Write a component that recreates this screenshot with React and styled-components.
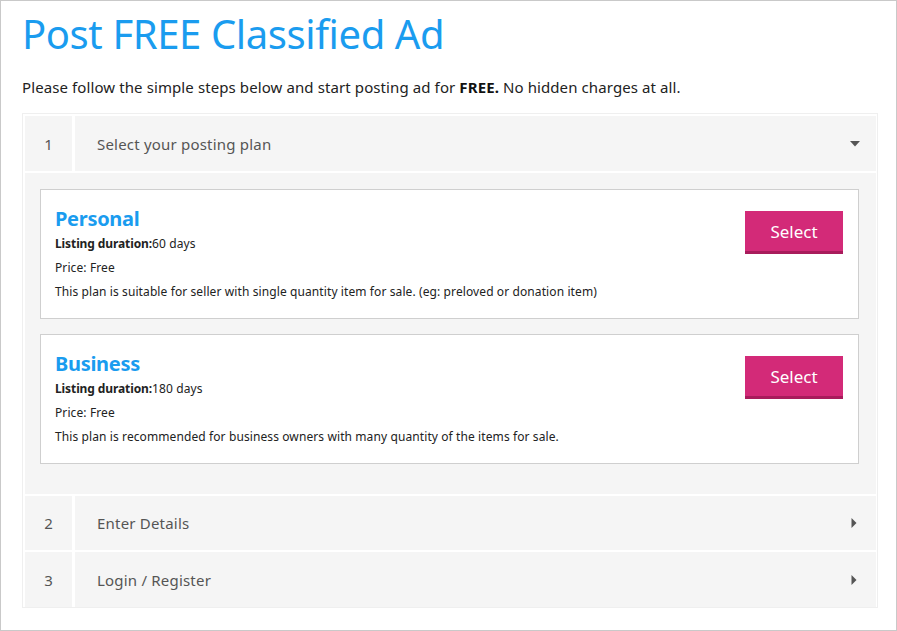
import React from "react";
import styled, { createGlobalStyle } from "styled-components";

const GlobalStyle = createGlobalStyle`
  html, body { margin: 0; padding: 0; background: #fff; }
  body { font-family: "Noto Sans", "Open Sans", sans-serif; color: #222; }
  * { box-sizing: border-box; }
`;

const Page = styled.div`
  width: 897px;
  height: 631px;
  border: 1px solid #c9c9c9;
  padding: 0 19px 0 21px;
  overflow: hidden;
`;

const Title = styled.h1`
  margin: 8px 0 0;
  font-size: 40px;
  line-height: 50px;
  font-weight: 400;
  color: #1a9cef;
  letter-spacing: -0.4px;
`;

const Intro = styled.p`
  margin: 18px 0 16px;
  font-size: 15px;
  line-height: 20px;
  letter-spacing: 0.1px;
  color: #222;
  b { font-weight: 700; color: #111; }
`;

const Accordion = styled.div`
  width: 856px;
  border: 1px solid #efefef;
  padding: 2px 1px 0 2px;
  display: flex;
  flex-direction: column;
  gap: 2px;
`;

const Step = styled.div`
  display: flex;
  flex-direction: column;
  gap: 2px;
`;

const Header = styled.div`
  display: flex;
  gap: 3px;
  height: ${(p) => p.$h}px;
`;

const NumCell = styled.div`
  width: 47px;
  background: #f5f5f5;
  display: flex;
  align-items: center;
  justify-content: center;
  font-size: 15px;
  color: #555;
`;

const TitleCell = styled.div`
  flex: 1;
  background: #f5f5f5;
  display: flex;
  align-items: center;
  justify-content: space-between;
  padding: 0 16px 0 22px;
  font-size: 15px;
  letter-spacing: 0.2px;
  color: #555;
`;

const Body = styled.div`
  background: #f5f5f5;
  padding: 16px 17px 30px 15px;
  display: flex;
  flex-direction: column;
  gap: 15px;
`;

const Card = styled.div`
  background: #fff;
  border: 1px solid #cfcfcf;
  height: 130px;
  padding: 16px 15px 0 14px;
  display: flex;
  justify-content: space-between;
  align-items: flex-start;
`;

const PlanInfo = styled.div`
  display: flex;
  flex-direction: column;
`;

const PlanName = styled.div`
  font-size: 20px;
  line-height: 26px;
  font-weight: 700;
  color: #1a9cef;
  letter-spacing: -0.3px;
`;

const Line = styled.div`
  font-size: 12px;
  line-height: 24px;
  letter-spacing: 0.1px;
  color: #222;
  b { font-weight: 700; letter-spacing: -0.1px; }
`;

const SelectButton = styled.button`
  margin-top: 5px;
  width: 98px;
  height: 43px;
  border: none;
  border-bottom: 3px solid #a81c5c;
  background: #d32a78;
  color: #fff;
  font-family: inherit;
  font-size: 17px;
  cursor: pointer;
  padding: 0;
`;

const Caret = ({ dir }) =>
  dir === "down" ? (
    <svg width="10" height="6" viewBox="0 0 10 6">
      <path d="M0 0 H10 L5 5.5 Z" fill="#555" />
    </svg>
  ) : (
    <svg width="6" height="10" viewBox="0 0 6 10" style={{ marginRight: 3 }}>
      <path d="M0.5 0 V10 L5.5 5 Z" fill="#555" />
    </svg>
  );

const plans = [
  {
    name: "Personal",
    days: "60 days",
    desc: "This plan is suitable for seller with single quantity item for sale. (eg: preloved or donation item)",
  },
  {
    name: "Business",
    days: "180 days",
    desc: "This plan is recommended for business owners with many quantity of the items for sale.",
  },
];

export default function App() {
  return (
    <>
      <GlobalStyle />
      <Page>
        <Title>Post FREE Classified Ad</Title>
        <Intro>
          Please follow the simple steps below and start posting ad for <b>FREE.</b> No hidden charges at all.
        </Intro>
        <Accordion>
          <Step>
            <Header $h={55}>
              <NumCell>1</NumCell>
              <TitleCell>
                Select your posting plan
                <Caret dir="down" />
              </TitleCell>
            </Header>
            <Body>
              {plans.map((p) => (
                <Card key={p.name}>
                  <PlanInfo>
                    <PlanName>{p.name}</PlanName>
                    <Line>
                      <b>Listing duration:</b>
                      {p.days}
                    </Line>
                    <Line>Price: Free</Line>
                    <Line>{p.desc}</Line>
                  </PlanInfo>
                  <SelectButton>Select</SelectButton>
                </Card>
              ))}
            </Body>
          </Step>
          <Header $h={54}>
            <NumCell>2</NumCell>
            <TitleCell>
              Enter Details
              <Caret dir="right" />
            </TitleCell>
          </Header>
          <Header $h={55}>
            <NumCell>3</NumCell>
            <TitleCell>
              Login / Register
              <Caret dir="right" />
            </TitleCell>
          </Header>
        </Accordion>
      </Page>
    </>
  );
}
